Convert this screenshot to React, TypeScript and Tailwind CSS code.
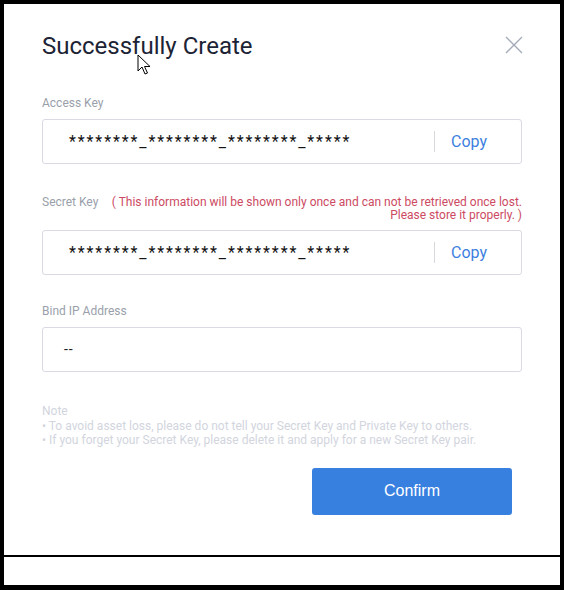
const MASK = '********_********_********_*****';

function KeyField({ value, copy = true }: { value: string; copy?: boolean }) {
  return (
    <div className="h-[45px] rounded-[3px] border border-[#d9dae3] flex items-center pl-[26px] pr-[34px]">
      <span className="flex-1 text-[16px] tracking-[1.9px] text-[#111] font-['Roboto',sans-serif]">{value}</span>
      {copy && (
        <div className="flex items-center">
          <div className="w-px h-[21px] bg-[#d6d8de] mr-[16px]" />
          <span className="text-[16px] text-[#3d7fe0] font-['Roboto',sans-serif]">Copy</span>
        </div>
      )}
    </div>
  );
}

export default function App() {
  return (
    <div className="w-[564px] h-[590px] bg-black pl-[4px] pt-[4px] pr-[4px] pb-[5px] font-['Roboto',sans-serif]">
      <div className="relative h-full bg-white flex flex-col">
        <div className="h-[551px] px-[38px] pt-[27px]">
          {/* Header */}
          <div className="flex items-center justify-between h-[30px]">
            <h1 className="text-[24px] leading-[30px] text-[#1c2335]">Successfully Create</h1>
            <svg width="18" height="18" viewBox="0 0 18 18" className="mr-[-1px] mt-[-2px]">
              <path d="M1 1L17 17M17 1L1 17" stroke="#a3aab8" strokeWidth="1.3" />
            </svg>
          </div>

          {/* Access Key */}
          <div className="mt-[34px] text-[12px] leading-[16px] text-[#9a9fab]">Access Key</div>
          <div className="mt-[8px]">
            <KeyField value={MASK} />
          </div>

          {/* Secret Key */}
          <div className="mt-[30px] flex justify-between">
            <span className="text-[12px] leading-[16px] text-[#9a9fab]">Secret Key</span>
            <span className="text-[12px] leading-[12.5px] text-right text-[#cc4a62] pt-[2px]">
              ( This information will be shown only once and can not be retrieved once lost.
              <br />
              Please store it properly. )
            </span>
          </div>
          <div className="mt-[9px]">
            <KeyField value={MASK} />
          </div>

          {/* Bind IP */}
          <div className="mt-[28px] text-[12px] leading-[16px] text-[#9a9fab]">Bind IP Address</div>
          <div className="mt-[8px] h-[45px] rounded-[3px] border border-[#d9dae3] flex items-center pl-[21px]">
            <span className="text-[14px] tracking-[1px] text-[#222]">--</span>
          </div>

          {/* Note */}
          <div className="mt-[32px] text-[12px] leading-[14.5px] text-[#d2d5de]">
            <div>Note</div>
            <div>• To avoid asset loss, please do not tell your Secret Key and Private Key to others.</div>
            <div>• If you forget your Secret Key, please delete it and apply for a new Secret Key pair.</div>
          </div>

          {/* Confirm */}
          <div className="mt-[20px] flex justify-end pr-[10px]">
            <button className="w-[200px] h-[47px] rounded-[3px] bg-[#3880e0] text-white text-[16px] font-['Liberation_Sans',sans-serif]">
              Confirm
            </button>
          </div>
        </div>
        <div className="h-[1.5px] bg-black" />
        <div className="flex-1" />

        {/* mouse pointer */}
        <svg className="absolute left-[133px] top-[50px]" width="14" height="22" viewBox="0 0 14 22">
          <path d="M1 1V17L5 13L8 20L10.5 19L7.5 12.5L13 12.5Z" fill="white" stroke="black" strokeWidth="1" strokeLinejoin="round" />
        </svg>
      </div>
    </div>
  );
}
